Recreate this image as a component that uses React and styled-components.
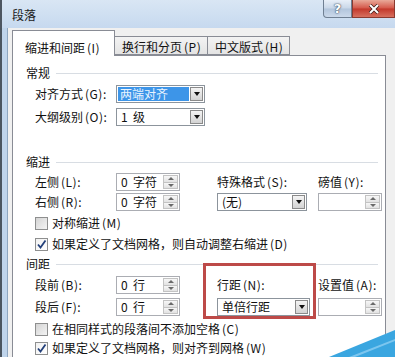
import styled, { createGlobalStyle } from "styled-components";

const GlobalStyle = createGlobalStyle`
  html, body {
    margin: 0;
    padding: 0;
    background: #f0f0f0;
  }
  body {
    font-family: "Noto Sans CJK SC", "Noto Sans", sans-serif;
    font-size: 12px;
    color: #111;
  }
  * { box-sizing: border-box; }
`;

const Window = styled.div`
  position: relative;
  width: 395px;
  height: 357px;
  overflow: hidden;
  display: flex;
  flex-direction: column;
  background: #f0f0f0;
`;

const TitleBar = styled.div`
  height: 28px;
  flex: none;
  display: flex;
  justify-content: space-between;
  align-items: flex-start;
  background: linear-gradient(#d9e6f4, #c6d9ef);
  border-left: 2px solid #4d5661;
`;

const Title = styled.span`
  padding: 7px 0 0 10px;
  line-height: 16px;
  font-size: 12px;
  color: #1a1a1a;
`;

const Captions = styled.div`
  display: flex;
`;

const CaptionButton = styled.div`
  width: ${(p) => p.$w}px;
  height: 18px;
  display: flex;
  align-items: center;
  justify-content: center;
  border: 1px solid ${(p) => (p.$close ? "#8a3a30" : "#6f7f92")};
  border-top: none;
  border-radius: ${(p) => (p.$close ? "0" : "0 0 0 4px")};
  background: ${(p) =>
    p.$close
      ? "linear-gradient(#e9a999, #d4584a 48%, #c2382b 52%, #d7705f)"
      : "linear-gradient(#e8eff8, #c9d7e8 48%, #b2c5dc 52%, #cbd9ea)"};
  color: #fff;
  font-family: "DejaVu Sans", sans-serif;
  font-weight: bold;
  font-size: 13px;
  text-shadow: 0 0 2px #2f3f55, 0 0 1px #2f3f55;
`;

const Frame = styled.div`
  flex: 1;
  display: flex;
  min-height: 0;
`;

const Edge = styled.div`
  width: 8px;
  flex: none;
  background: linear-gradient(
    90deg,
    #4b5560 0 2px,
    #bfd4eb 2px 7px,
    #8ea6c0 7px 8px
  );
`;

const Client = styled.div`
  flex: 1;
  min-width: 0;
  display: flex;
  flex-direction: column;
  padding: 0 9px 0 4px;
`;

const TabRow = styled.div`
  height: 27px;
  flex: none;
  display: flex;
  align-items: flex-end;
`;

const Tab = styled.div`
  position: relative;
  width: ${(p) => p.$w}px;
  height: ${(p) => (p.$active ? 26 : 19)}px;
  margin-bottom: ${(p) => (p.$active ? -1 : 0)}px;
  margin-left: ${(p) => (p.$first ? 0 : -1)}px;
  padding: ${(p) => (p.$active ? "9px 0 0 12px" : "2px 0 0 7px")};
  line-height: 16px;
  border: 1px solid #898c95;
  border-bottom: ${(p) => (p.$active ? "none" : "1px solid #898c95")};
  background: ${(p) => (p.$active ? "#fff" : "linear-gradient(#f3f3f3, #e4e4e4)")};
  z-index: ${(p) => (p.$active ? 2 : 1)};
  white-space: nowrap;
`;

const Panel = styled.div`
  flex: 1;
  position: relative;
  background: #fff;
  border: 1px solid #898c95;
  border-bottom: none;
  padding: 9px 0 0 13px;
`;

const SectionHeader = styled.div`
  display: flex;
  align-items: center;
  gap: 6px;
  height: 16px;
  margin: ${(p) => p.$mt || 0}px 7px 0 0;
  line-height: 16px;

  &::after {
    content: "";
    flex: 1;
    height: 1px;
    background: #d8dde3;
  }
`;

// access key like "(G)" — drawn a bit wider, as in the Windows dialog font
const Key = styled.span`
  margin-left: 2px;
  letter-spacing: 0.5px;
`;

const FieldRow = styled.div`
  display: flex;
  align-items: center;
  height: 18px;
  margin: ${(p) => p.$mt}px 0 0 9px;
`;

const FieldLabel = styled.span`
  width: 81px;
  flex: none;
  line-height: 16px;
  white-space: nowrap;
`;

const FieldGrid = styled.div`
  position: relative;
  display: grid;
  grid-template-columns: 81px 101px 101px 65px;
  grid-auto-rows: 18px;
  row-gap: ${(p) => p.$gap}px;
  align-items: center;
  margin: ${(p) => p.$mt}px 0 0 9px;
`;

const CellLabel = styled.span`
  line-height: 16px;
  white-space: nowrap;
`;

const Select = styled.div`
  width: ${(p) => p.$w}px;
  height: 18px;
  display: flex;
  padding: 1px;
  border: 1px solid #8c949c;
  background: #fff;
`;

const SelectValue = styled.div`
  flex: 1;
  display: flex;
  align-items: center;
  padding-left: ${(p) => (p.$highlight ? 0 : 3)}px;
  line-height: 14px;
  white-space: pre;
`;

const Highlight = styled.span`
  flex: 1;
  align-self: stretch;
  display: flex;
  align-items: center;
  padding-left: 2px;
  margin-right: 1px;
  background: #3d95e8;
  color: #eaf4ff;
`;

const DropButton = styled.div`
  width: 13px;
  flex: none;
  display: flex;
  align-items: center;
  justify-content: center;
  border: 1px solid #8a8a8a;
  background: linear-gradient(#f4f4f4, #d3d3d3);

  &::after {
    content: "";
    border-left: 3.5px solid transparent;
    border-right: 3.5px solid transparent;
    border-top: 4px solid #111;
  }
`;

const Spin = styled.div`
  width: 64px;
  height: 18px;
  display: flex;
  padding: 1px;
  border: 1px solid #abadb3;
  background: #fff;
`;

const SpinValue = styled.div`
  flex: 1;
  display: flex;
  align-items: center;
  padding-left: 3px;
  line-height: 14px;
  white-space: pre;
`;

const SpinButtons = styled.div`
  width: 15px;
  flex: none;
  display: flex;
  flex-direction: column;
`;

const SpinArrow = styled.div`
  flex: 1;
  display: flex;
  align-items: center;
  justify-content: center;
  border: 1px solid #c3c3c3;
  margin-top: ${(p) => (p.$down ? -1 : 0)}px;
  background: linear-gradient(#f7f7f7, #e2e2e2);

  &::after {
    content: "";
    border-left: 3px solid transparent;
    border-right: 3px solid transparent;
    ${(p) => (p.$down ? "border-top: 3px solid #6a6a6a;" : "border-bottom: 3px solid #6a6a6a;")}
  }
`;

const CheckRow = styled.div`
  display: flex;
  align-items: center;
  gap: 4px;
  height: 16px;
  margin: ${(p) => p.$mt}px 0 0 9px;
  line-height: 16px;
  white-space: nowrap;
`;

const Box = styled.span`
  width: 13px;
  height: 13px;
  flex: none;
  display: flex;
  align-items: center;
  justify-content: center;
  border: 1px solid #8e8f8f;
  background: ${(p) =>
    p.$checked
      ? "linear-gradient(135deg, #f1f1f1, #ffffff)"
      : "linear-gradient(135deg, #d4d4d4, #f4f4f4)"};
`;

const Annotation = styled.div`
  position: absolute;
  left: 168px;
  top: -13px;
  width: 113px;
  height: 56px;
  border: 3px solid #bd4a48;
  pointer-events: none;
`;

const Wedge = styled.svg`
  position: absolute;
  right: 0;
  bottom: 0;
`;

function Dropdown({ w, value, highlight }) {
  return (
    <Select $w={w}>
      <SelectValue $highlight={highlight}>
        {highlight ? <Highlight>{value}</Highlight> : value}
      </SelectValue>
      <DropButton />
    </Select>
  );
}

function Spinner({ value }) {
  return (
    <Spin>
      <SpinValue>{value}</SpinValue>
      <SpinButtons>
        <SpinArrow />
        <SpinArrow $down />
      </SpinButtons>
    </Spin>
  );
}

function Check({ checked, label, k, mt }) {
  return (
    <CheckRow $mt={mt}>
      <Box $checked={checked}>
        {checked && (
          <svg width="11" height="11" viewBox="0 0 11 11">
            <path d="M2 5.5 L4.5 8.5 L9.5 1.5" fill="none" stroke="#23407a" strokeWidth="1.8" />
          </svg>
        )}
      </Box>
      <span>
        {label}
        <Key>({k})</Key>
      </span>
    </CheckRow>
  );
}

function Label({ text, k, as: Comp = CellLabel }) {
  return (
    <Comp>
      {text}
      <Key>({k}):</Key>
    </Comp>
  );
}

export default function App() {
  return (
    <Window>
      <GlobalStyle />
      <TitleBar>
        <Title>段落</Title>
        <Captions>
          <CaptionButton $w={29}>?</CaptionButton>
          <CaptionButton $w={43} $close>
            <svg width="12" height="10" viewBox="0 0 12 10">
              <path d="M2 1 L10 9 M10 1 L2 9" stroke="#3b1a16" strokeWidth="3.4" />
              <path d="M2 1 L10 9 M10 1 L2 9" stroke="#fff" strokeWidth="2" />
            </svg>
          </CaptionButton>
        </Captions>
      </TitleBar>
      <Frame>
        <Edge />
        <Client>
          <TabRow>
            <Tab $w={103} $active $first>
              缩进和间距<Key>(I)</Key>
            </Tab>
            <Tab $w={94}>
              换行和分页<Key>(P)</Key>
            </Tab>
            <Tab $w={83}>
              中文版式<Key>(H)</Key>
            </Tab>
          </TabRow>
          <Panel>
            <SectionHeader>常规</SectionHeader>
            <FieldRow $mt={4}>
              <Label as={FieldLabel} text="对齐方式" k="G" />
              <Dropdown w={89} value="两端对齐" highlight />
            </FieldRow>
            <FieldRow $mt={5}>
              <Label as={FieldLabel} text="大纲级别" k="O" />
              <Dropdown w={89} value="1  级" />
            </FieldRow>

            <SectionHeader $mt={28}>缩进</SectionHeader>
            <FieldGrid $mt={3} $gap={2}>
              <Label text="左侧" k="L" />
              <Spinner value="0  字符" />
              <Label text="特殊格式" k="S" />
              <Label text="磅值" k="Y" />
              <Label text="右侧" k="R" />
              <Spinner value="0  字符" />
              <Dropdown w={90} value="(无)" />
              <Spinner value="" />
            </FieldGrid>
            <Check mt={4} label="对称缩进" k="M" />
            <Check mt={5} checked label="如果定义了文档网格，则自动调整右缩进" k="D" />

            <SectionHeader $mt={4}>间距</SectionHeader>
            <FieldGrid $mt={4} $gap={4}>
              <Label text="段前" k="B" />
              <Spinner value="0  行" />
              <Label text="行距" k="N" />
              <Label text="设置值" k="A" />
              <Label text="段后" k="F" />
              <Spinner value="0  行" />
              <Dropdown w={93} value="单倍行距" />
              <Spinner value="" />
              <Annotation />
            </FieldGrid>
            <Check mt={5} label="在相同样式的段落间不添加空格" k="C" />
            <Check mt={3} checked label="如果定义了文档网格，则对齐到网格" k="W" />
          </Panel>
        </Client>
      </Frame>
      <Wedge width="70" height="30" viewBox="0 0 70 30">
        <polygon points="4,30 70,3 70,30" fill="#3aa6e0" />
        <polygon points="24,30 70,12 70,14 30,30" fill="#7cc6ef" />
      </Wedge>
    </Window>
  );
}
